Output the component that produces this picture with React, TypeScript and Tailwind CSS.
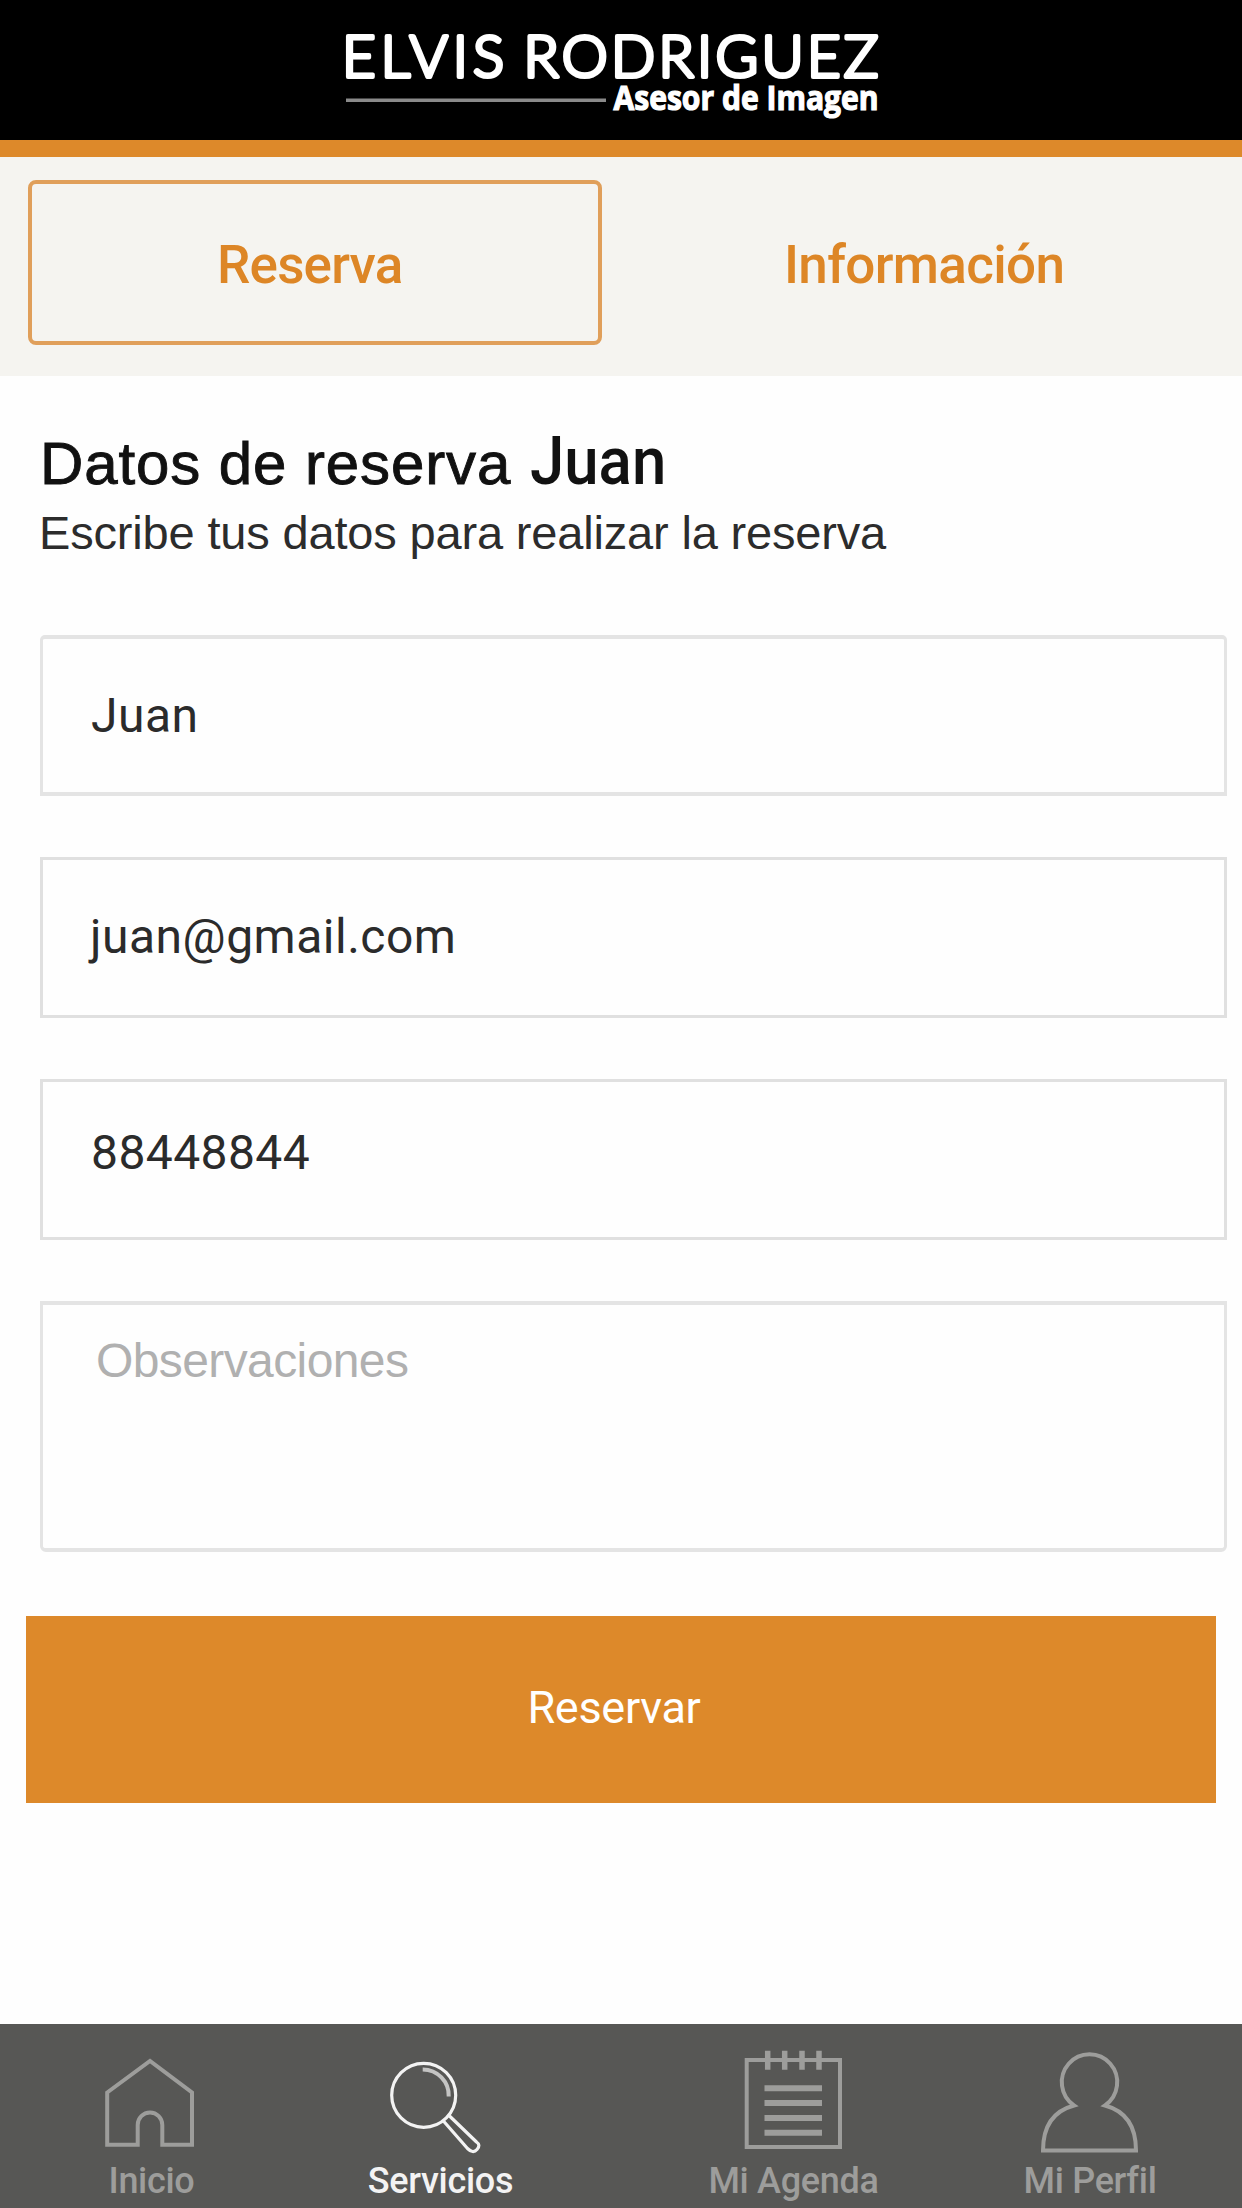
import type { ReactNode } from "react";

function Logo() {
  return (
    <svg width="560" height="140" viewBox="330 0 560 140" className="block" role="img" aria-label="Elvis Rodriguez">
      <g
        fill="#fff"
        stroke="#fff"
        strokeWidth="4.2"
        strokeLinejoin="round"
        fontFamily="Lato, sans-serif"
        fontWeight="300"
        fontSize="58"
      >
        <text x="342" y="77" textLength="162" lengthAdjust="spacing">ELVIS</text>
        <text x="523.5" y="77" textLength="355" lengthAdjust="spacing">RODRIGUEZ</text>
      </g>
      <rect x="346" y="98.5" width="260" height="3.5" fill="#8a8a8a" />
      <text
        x="613.5"
        y="109.5"
        fill="#fff"
        stroke="#fff"
        strokeWidth="1.2"
        fontFamily="'Open Sans', sans-serif"
        fontWeight="700"
        fontSize="34"
        textLength="265"
        lengthAdjust="spacingAndGlyphs"
      >
        Asesor de Imagen
      </text>
    </svg>
  );
}

function NavItem({
  label,
  viewBox,
  className,
  children,
}: {
  label: string;
  viewBox: string;
  className: string;
  children: ReactNode;
}) {
  return (
    <a className={`flex flex-col items-center ${className}`}>
      <svg width="120" height="136" viewBox={viewBox} fill="none" stroke="currentColor" strokeWidth="4" className="block shrink-0">
        {children}
      </svg>
      <span className="h-[42px] whitespace-nowrap text-[36px] leading-[42px] tracking-[-0.3px]">{label}</span>
    </a>
  );
}

export default function App() {
  return (
    <div className="flex h-[2208px] w-[1242px] flex-col overflow-hidden bg-[#fefefe] font-['Roboto',sans-serif]">
      <header className="flex h-[157px] shrink-0 justify-center border-b-[17px] border-[#dd892a] bg-black">
        <div className="-ml-[22px]">
          <Logo />
        </div>
      </header>

      <nav className="flex h-[219px] shrink-0 bg-[#f5f4f0] pt-[23px] pl-[28px] text-[53px] leading-[62px] font-medium text-[#dd8626]">
        <button className="h-[165px] w-[574px] rounded-lg border-4 border-[#e09f5a] pt-[5px] pl-[185px] text-left tracking-[-0.8px]">
          Reserva
        </button>
        <button className="h-[165px] w-[640px] pt-[5px] pl-[182px] text-left tracking-[-0.65px]">Información</button>
      </nav>

      <main className="flex flex-1 flex-col pt-[52px]">
        <h1 className="flex h-[78px] items-baseline pl-[40px] text-[60px] leading-[67px] whitespace-pre text-[#111]">
          <span className="w-[490px] font-['Liberation_Sans',sans-serif] tracking-[0.9px] [-webkit-text-stroke:0.9px_#111]">
            Datos de reserva
          </span>
          <span className="inline-block origin-left scale-x-[0.935] text-[66px] font-medium">Juan</span>
        </h1>
        <p className="h-[53px] pl-[39px] font-['Liberation_Sans',sans-serif] text-[47px] leading-[53px] tracking-[-0.17px] whitespace-nowrap text-[#2c2c2c]">
          Escribe tus datos para realizar la reserva
        </p>

        <form className="mt-[76px] flex flex-col pl-[40px] text-[48px] leading-[57px] text-[#2b2b2b]">
          <input
            className="h-[161px] w-[1187px] rounded-t-[5px] border-x-[3px] border-y-4 border-[#e4e4e4] pl-[48px] tracking-[0.5px]"
            defaultValue="Juan"
          />
          <input
            className="mt-[61px] h-[161px] w-[1187px] border-[3px] border-[#e0e0e0] pb-[2px] pl-[40px] indent-[7px] tracking-[0.5px]"
            defaultValue="juan@gmail.com"
          />
          <input
            className="mt-[61px] h-[161px] w-[1187px] border-[3px] border-[#e0e0e0] pb-[14px] pl-[48px] tracking-[0.4px]"
            defaultValue="88448844"
          />
          <textarea
            className="mt-[61px] h-[251px] w-[1187px] resize-none rounded-b-[6px] border-x-[3px] border-y-4 border-[#e4e4e4] pt-[29px] pl-[53px] font-['Liberation_Sans',sans-serif] leading-[53px] tracking-[-0.6px] placeholder:text-[#b0b0b0]"
            placeholder="Observaciones"
          />
        </form>

        <button className="mt-[64px] ml-[26px] h-[187px] w-[1190px] bg-[#dd892a] pr-[14px] pb-[3px] text-[45px] tracking-[-0.3px] text-white">
          Reservar
        </button>
      </main>

      <footer className="flex h-[184px] shrink-0 bg-[#575755] font-medium text-[#9d9d9b]">
        <NavItem label="Inicio" viewBox="92 2024 120 136" className="w-[303px]">
          <path d="M107.2 2092.5 150 2061l42 31.5v52.2h-29.7V2125a12.3 12.5 0 0 0-24.6 0v19.7h-30.5Z" />
        </NavItem>
        <NavItem label="Servicios" viewBox="381 2024 120 136" className="w-[275px] text-[#f3f3f3]">
          <g strokeWidth="3.2">
            <circle cx="423.7" cy="2095.3" r="32" />
            <path d="M422.7 2069.5a26 26 0 0 1 26 27" stroke="#c4c4c3" strokeWidth="4" />
            <path d="M443 2120.5 467.5 2148.5Q473 2154 477 2149.5T476.5 2142L449 2115.5" strokeLinejoin="round" />
          </g>
        </NavItem>
        <NavItem label="Mi Agenda" viewBox="734 2024 120 136" className="w-[431px]">
          <rect x="746.7" y="2060" width="93.3" height="87" />
          <path d="M767.7 2050.7v19M784.7 2050.7v19M802 2050.7v19M819 2050.7v19" strokeWidth="5.5" />
          <path d="M764.5 2088.3H822M764.5 2103H822M764.5 2118H822M764.5 2132.7H822" strokeWidth="6" />
        </NavItem>
        <NavItem label="Mi Perfil" viewBox="1030.5 2024 120 136" className="w-[162px]">
          <path d="M1074.5 2105.5A27.7 28 0 1 1 1105.5 2105.5C1126 2111 1136.5 2126 1136.5 2150.5H1043.5C1043.5 2126 1054 2111 1074.5 2105.5Z" />
        </NavItem>
      </footer>
    </div>
  );
}
